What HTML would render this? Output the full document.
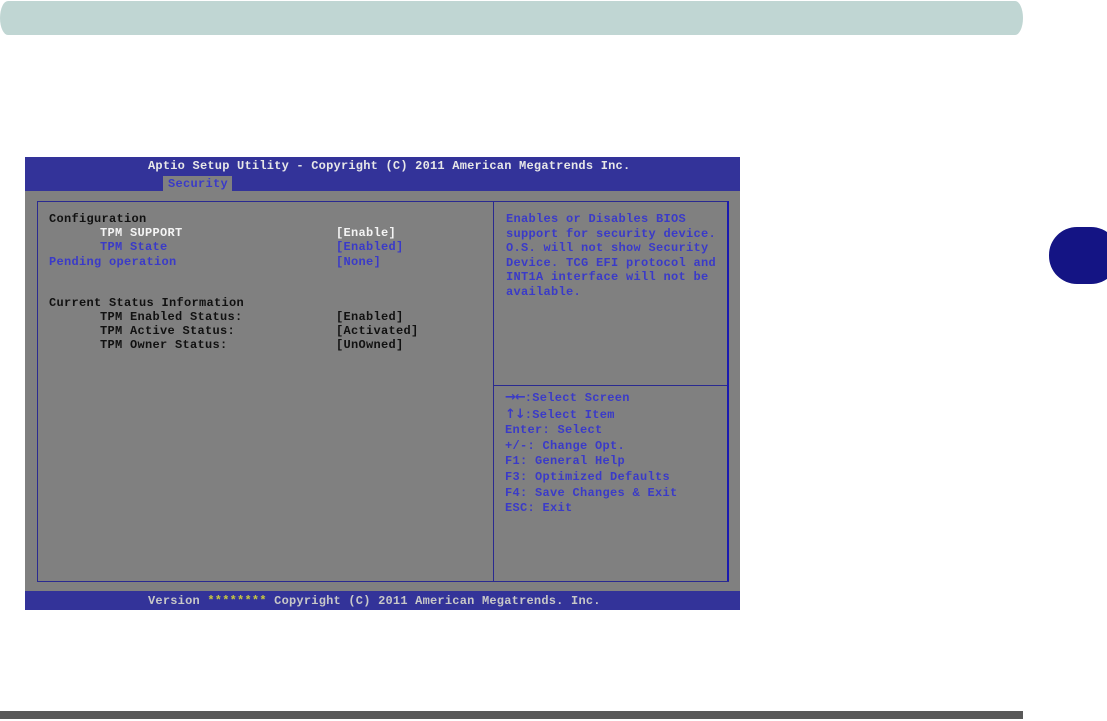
<!DOCTYPE html>
<html><head><style>
body{margin:0;width:1107px;height:721px;background:#fff;position:relative;overflow:hidden;font-family:"Liberation Mono",monospace;}
.a{position:absolute}
.t{position:absolute;font-size:12px;letter-spacing:.3px;white-space:pre;font-weight:bold;line-height:14px}
.k{color:#111}.w{color:#f4f4f4}.b{color:#3a3ac8}
.ar{font-family:"DejaVu Sans",sans-serif;font-size:13px;letter-spacing:-1px}
</style></head><body>
<div class="a" style="left:0;top:1px;width:1023px;height:34px;background:#c0d6d3;border-radius:8px/17px"></div>
<div class="a" style="left:1049px;top:227px;width:70px;height:57px;background:#141484;border-radius:28px"></div>
<div class="a" style="left:0;top:711px;width:1023px;height:8px;background:#595959"></div>

<div class="a" style="left:25px;top:157px;width:715px;height:453px;background:#808080"></div>
<div class="a" style="left:25px;top:157px;width:715px;height:34px;background:#333399"></div>
<div class="a" style="left:163px;top:176px;width:69px;height:15px;background:#808080"></div>
<div class="t" style="left:148px;top:159px;color:#e8e8e8;letter-spacing:.22px">Aptio Setup Utility - Copyright (C) 2011 American Megatrends Inc.</div>
<div class="t b" style="left:168px;top:177px">Security</div>
<div class="a" style="left:25px;top:591px;width:715px;height:19px;background:#333399"></div>
<div class="t" style="left:148px;top:594px;color:#c8c8c8;letter-spacing:.22px">Version <span style="color:#c8c840">********</span> Copyright (C) 2011 American Megatrends. Inc.</div>

<div class="a" style="left:37px;top:201px;width:690px;height:379px;border:1px solid #2a2a90"></div>
<div class="a" style="left:493px;top:201px;width:1px;height:380px;background:#2a2a90"></div>
<div class="a" style="left:494px;top:385px;width:234px;height:1px;background:#2a2a90"></div>
<div class="a" style="left:727px;top:201px;width:2px;height:380px;background:#1a1ab0"></div>

<div class="t k" style="left:49px;top:212px">Configuration</div>
<div class="t w" style="left:100px;top:226px">TPM SUPPORT</div>
<div class="t w" style="left:336px;top:226px">[Enable]</div>
<div class="t b" style="left:100px;top:240px">TPM State</div>
<div class="t b" style="left:336px;top:240px">[Enabled]</div>
<div class="t b" style="left:49px;top:255px">Pending operation</div>
<div class="t b" style="left:336px;top:255px">[None]</div>
<div class="t k" style="left:49px;top:296px">Current Status Information</div>
<div class="t k" style="left:100px;top:310px">TPM Enabled Status:</div>
<div class="t k" style="left:336px;top:310px">[Enabled]</div>
<div class="t k" style="left:100px;top:324px">TPM Active Status:</div>
<div class="t k" style="left:336px;top:324px">[Activated]</div>
<div class="t k" style="left:100px;top:338px">TPM Owner Status:</div>
<div class="t k" style="left:336px;top:338px">[UnOwned]</div>

<div class="t b" style="left:506px;top:212px;line-height:14.6px">Enables or Disables BIOS
support for security device.
O.S. will not show Security
Device. TCG EFI protocol and
INT1A interface will not be
available.</div>

<div class="t b" style="left:505px;top:390px;line-height:15.6px"><span class="ar">→←</span>:Select Screen
<span class="ar">↑↓</span>:Select Item
Enter: Select
+/-: Change Opt.
F1: General Help
F3: Optimized Defaults
F4: Save Changes &amp; Exit
ESC: Exit</div>
</body></html>
